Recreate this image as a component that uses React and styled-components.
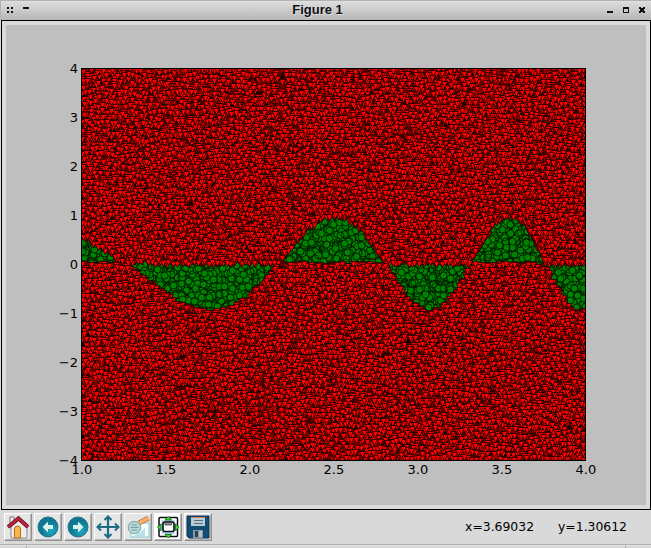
import React, { useMemo } from 'react';
import styled, { createGlobalStyle } from 'styled-components';

const Global = createGlobalStyle`
  * { box-sizing: border-box; }
  html, body { margin: 0; padding: 0; overflow: hidden; background: #d9d9d9; }
`;
const Window = styled.div`
  width: 651px; height: 548px; display: flex; flex-direction: column;
  background: #d9d9d9; overflow: hidden;
`;
const TitleBar = styled.header`
  height: 20px; flex: none; display: grid; grid-template-columns: 1fr auto 1fr;
  align-items: start; border-top: 1px solid #b8b1ae; border-left: 1px solid #b8b1ae;
  background: linear-gradient(#dedede, #b5b7b5);
`;
const Title = styled.h1`
  margin: 0; font: bold 13px/18px "Liberation Sans", Arial, sans-serif; color: #101018;
  padding-right: 17px;
  text-shadow: 1px 1px 0 #dedede;
`;
const Controls = styled.div`
  display: flex; justify-content: ${p => (p.$end ? 'flex-end' : 'flex-start')};
  svg { display: block; }
`;
const Canvas = styled.main`
  height: 490px; flex: none; margin-left: 1px; border: 1px solid #000; padding: 4px;
  background: #d9dad9;
`;
const Figure = styled.div`
  width: 640px; height: 480px; background: #bfbfbf;
  svg { display: block; }
`;
const Tick = styled.text`
  font: 13px "DejaVu Sans", sans-serif; fill: #000;
`;
const Toolbar = styled.footer`
  height: 34px; flex: none; display: flex; align-items: flex-start; padding: 3px 24px 0 4px; gap: 2px;
`;
const ToolButton = styled.button`
  width: 28px; height: 28px; padding: 1px; border: 1px solid;
  border-color: #fff #929292 #929292 #fff; box-shadow: inset -1px -1px #b5b5b5;
  background: ${p => (p.$white ? '#fff' : '#e6e6e6')};
  svg { display: block; width: 24px; height: 24px; }
`;
const Status = styled.output`
  margin-left: auto; display: flex; gap: 24px; padding-top: 6px;
  font: 12.4px/16px "DejaVu Sans", sans-serif; color: #000;
`;
const BottomEdge = styled.div`
  height: 4px; flex: none; display: grid; grid-template-columns: 26px 1fr 26px;
  border-top: 1px solid #b3afac;
`;
const EdgeCell = styled.span`
  border-left: ${p => (p.$line ? '1px solid #b3afac' : '0')};
  border-top: 1px solid #e2e2e2;
`;

function createRandom(seed) {
  let s = seed;
  return () => {
    s = (s + 0x6d2b79f5) | 0;
    let t = Math.imul(s ^ (s >>> 15), 1 | s);
    t = (t + Math.imul(t ^ (t >>> 7), 61 | t)) ^ t;
    return ((t ^ (t >>> 14)) >>> 0) / 4294967296;
  };
}

const LEFT = 75.5, TOP = 43.5, WIDTH = 504, HEIGHT = 392;
const RED_LAYERS = 200, GREEN_LAYERS = 80;

// Samples between zero and cos(x²) are green circles; the others are red triangles.
function buildSamples() {
  const random = createRandom(31415);
  const red = Array.from({ length: RED_LAYERS }, () => []);
  const green = Array.from({ length: GREEN_LAYERS }, () => []);
  for (let i = 0; i < 50000; i++) {
    const x = 1 + random() * 3, y = random() * 8 - 4;
    const curve = Math.cos(x * x) * 0.97;
    const inside = curve > 0 ? y > 0 && y < curve : y < 0 && y > curve;
    const px = Math.round(LEFT + (x - 1) * WIDTH / 3) + 0.5;
    const py = Math.round(TOP + (4 - y) * HEIGHT / 8 - 0.5) + 0.5;
    if (inside) green[i % GREEN_LAYERS].push(`M${px - 3.5} ${py}a3.5 3.5 0 1 0 7 0a3.5 3.5 0 1 0-7 0z`);
    else red[i % RED_LAYERS].push(`M${px - 3} ${py - 3}h6l-3 6z`);
  }
  return { red: red.map(a => a.join('')), green: green.map(a => a.join('')) };
}

function Plot() {
  const samples = useMemo(buildSamples, []);
  return (
    <svg width="640" height="480">
      <clipPath id="axes"><rect x="75" y="43" width="505" height="393" /></clipPath>
      <rect x="75" y="43" width="505" height="393" fill="#160000" />
      <g clipPath="url(#axes)" stroke="#000" strokeLinejoin="bevel">
        <g fill="#008400" strokeWidth=".7">{samples.green.map((d, i) => <path key={i} d={d} />)}</g>
        <g fill="#f00" strokeWidth=".62">{samples.red.map((d, i) => <path key={i} d={d} />)}</g>
      </g>
      <rect x="75.5" y="43.5" width="504" height="392" fill="none" stroke="#000" />
      {[4, 3, 2, 1, 0, -1, -2, -3, -4].map((n, i) => (
        <Tick key={n} x="72" y={48 + i * 49} textAnchor="end">{n < 0 ? `−${-n}` : n}</Tick>
      ))}
      {[1, 1.5, 2, 2.5, 3, 3.5, 4].map((n, i) => (
        <Tick key={n} x={75.9 + i * 84} y="449" textAnchor="middle">{n.toFixed(1)}</Tick>
      ))}
    </svg>
  );
}

const Home = () => <svg viewBox="0 0 24 24">
  <path d="M4 2h4v8H4z" fill="#f4f1de" stroke="#777" />
  <path d="M5 12 13 5l8 7v11H5z" fill="#eee" stroke="#888" />
  <path d="M8.5 23v-9q0-3 3-3t3 3v9z" fill="#f8b84f" stroke="#b86718" />
  <path d="m2 12 10.5-8.5L22 12" fill="none" stroke="#64121e" strokeWidth="4" />
  <path d="m2 12 10.5-8.5L22 12" fill="none" stroke="#b52340" strokeWidth="2.6" />
</svg>;
const Arrow = ({ right }) => <svg viewBox="0 0 24 24">
  <defs><radialGradient id={right ? 'orbR' : 'orbL'} cx=".65" cy=".7"><stop stopColor="#20a9bb" /><stop offset="1" stopColor="#0c7893" /></radialGradient></defs>
  <circle cx="12" cy="12" r="10" fill={`url(#${right ? 'orbR' : 'orbL'})`} stroke="#2a6f88" />
  <path d={right ? 'M7 10h5V6.5l5.5 5.5-5.5 5.5V14H7z' : 'M17 10h-5V6.5L6.5 12l5.5 5.5V14h5z'} fill="#d9f2ed" />
</svg>;
const Move = () => <svg viewBox="0 0 24 24">
  <path d="M12 3v18M3 12h18" stroke="#1b6b85" strokeWidth="2.2" />
  <path d="m8.5 5 3.5-3.5L15.5 5m-7 14 3.5 3.5 3.5-3.5M5 8.5 1.5 12 5 15.5m14-7 3.5 3.5-3.5 3.5" fill="none" stroke="#1b6b85" strokeWidth="2" />
</svg>;
const Zoom = () => <svg viewBox="0 0 24 24">
  <path d="M5 8h18v14H5z" fill="#f8ffff" stroke="#83c7d5" />
  <path d="M2 22q10-1 17-9v9z" fill="#b8e0e8" />
  <path d="m13 8 9.5-5" stroke="#b7783f" strokeWidth="5" />
  <path d="m13 8 9.5-5" stroke="#f8b165" strokeWidth="3.4" />
  <circle cx="8.5" cy="12.5" r="6.2" fill="#b7dcd9" stroke="#8cabb0" strokeWidth="1.2" />
  <path d="M5.5 10h6m-7 2.5h8m-7 2.5h6" stroke="#719da7" />
</svg>;
const Subplots = () => <svg viewBox="0 0 24 24">
  <rect x="3" y="2.5" width="18.5" height="19" rx="1" fill="#e1edf7" stroke="#111" strokeWidth="1.5" />
  <path d="M5 4.5h14.5v15H5z" fill="#a7c5df" />
  <path d="M5 8V4.5h4m6 0h4.5V8m0 8v3.5H16M9 19.5H5V16" fill="none" stroke="#fff" strokeWidth="1.5" />
  <rect x="7" y="7" width="11" height="9.5" rx="2" fill="#fff" stroke="#111" strokeWidth="1.6" />
  <path d="M9 7.5h6.5V10H9z" fill="#999" stroke="#222" strokeWidth=".7" />
  <path d="m9 5 3.3-3.5L15.6 5zM9 19.5l3.3 3.5 3.3-3.5zM5 9l-3.5 3.3L5 15.6zM19.5 9l3.5 3.3-3.5 3.3z" fill="#42df2b" stroke="#086916" strokeWidth=".8" />
</svg>;
const Save = () => <svg viewBox="0 0 24 24">
  <path d="M1 1h22v22H3l-2-2z" fill="#124c70" stroke="#0d3553" />
  <path d="M5 2h14v9H5z" fill="#b9cbd5" /><path d="M5 2.5h14" stroke="#cf8262" />
  <path d="M8 5.5h9M8 8.5h9" stroke="#586f7c" />
  <path d="M7 15h10v8H7z" fill="#8898a3" /><path d="M9 16h3v6H9z" fill="#254659" /><path d="M13 16h3v6h-3z" fill="#b9c1c6" />
</svg>;

const tools = [
  ['Home', <Home />], ['Back', <Arrow />], ['Forward', <Arrow right />], ['Pan', <Move />],
  ['Zoom', <Zoom />], ['Configure subplots', <Subplots />, true], ['Save', <Save />],
];

export default function App() {
  return <>
    <Global />
    <Window>
      <TitleBar>
        <Controls><svg width="32" height="18"><path d="M6 6h2v2H6zm4 0h2v2h-2zM6 10h2v2H6zm4 0h2v2h-2zM22 6h6v2h-6z" fill="#111" /></svg></Controls>
        <Title>Figure 1</Title>
        <Controls $end><svg width="50" height="18" fill="#111">
          <path d="M6 10h6v2H6z" />
          <path fillRule="evenodd" d="M22 6h6v6h-6zm1 2v3h4V8z" />
          <path d="M38 6h2v1h2V6h2v2h-1v2h1v2h-2v-1h-2v1h-2v-2h1V8h-1z" />
        </svg></Controls>
      </TitleBar>
      <Canvas><Figure><Plot /></Figure></Canvas>
      <Toolbar>
        {tools.map(([name, icon, white]) => <ToolButton key={name} aria-label={name} $white={white}>{icon}</ToolButton>)}
        <Status><span>x=3.69032</span><span>y=1.30612</span></Status>
      </Toolbar>
      <BottomEdge><EdgeCell /><EdgeCell $line /><EdgeCell $line /></BottomEdge>
    </Window>
  </>;
}
